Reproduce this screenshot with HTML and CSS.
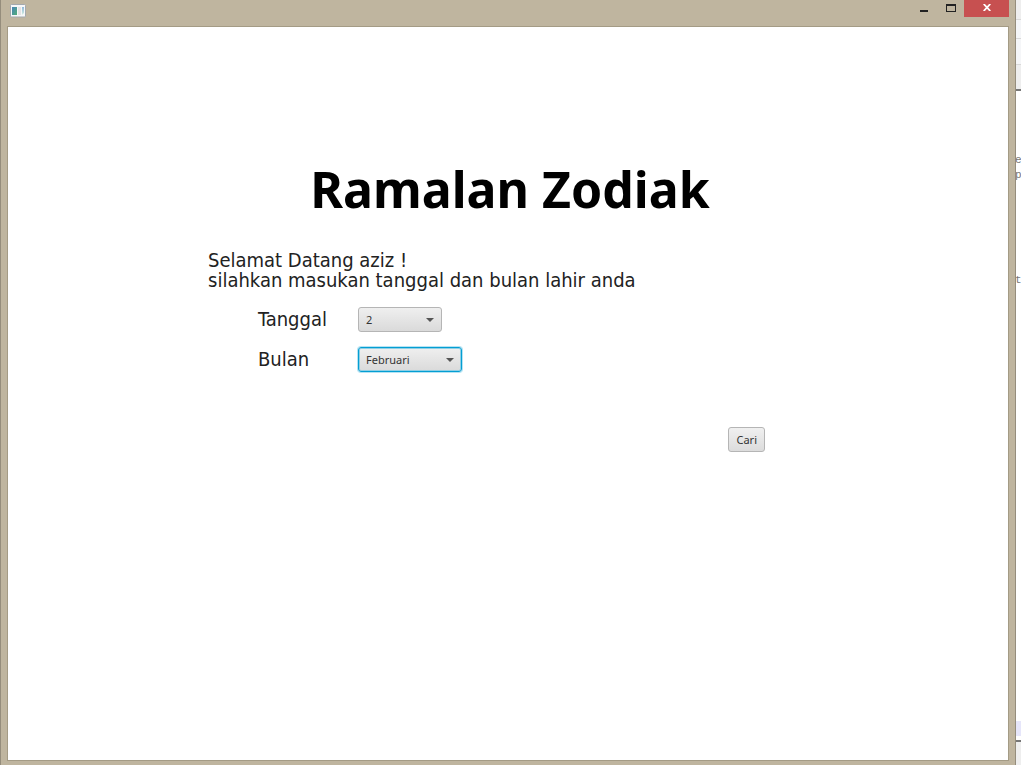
FILE: index.html
```html
<!DOCTYPE html>
<html lang="id">
<head>
<meta charset="utf-8">
<title>Ramalan Zodiak</title>
<link rel="stylesheet" href="styles.css">
</head>
<body>
<div class="window">
  <header class="titlebar">
    <svg class="app-icon" width="16" height="14" viewBox="0 0 16 14" aria-hidden="true">
      <defs>
        <linearGradient id="pane" x1="0" y1="0" x2="1" y2="1"><stop offset="0" stop-color="#4a83b8"/><stop offset="1" stop-color="#4fae78"/></linearGradient>
        <linearGradient id="side" x1="0" y1="0" x2="0" y2="1"><stop offset="0" stop-color="#8fb8dc"/><stop offset="1" stop-color="#d5efe0"/></linearGradient>
      </defs>
      <rect x=".5" y=".5" width="15" height="12.5" rx="1" fill="#f6f7f8" stroke="#a3a8ae"/>
      <rect x="2" y="3" width="5" height="8" fill="url(#pane)"/>
      <rect x="8" y="3" width="3" height="8" fill="#e3e3e3"/>
      <path d="M12 3h2v6l-2 2z" fill="url(#side)"/>
    </svg>
    <div class="controls">
      <button class="control" type="button" aria-label="Minimize">
        <svg width="8" height="8" viewBox="0 0 8 8"><path d="M0 6h8v2H0z" fill="#222"/></svg>
      </button>
      <button class="control" type="button" aria-label="Maximize">
        <svg width="10" height="8" viewBox="0 0 10 8"><path d="M0 0h10v8H0zM1 2v5h8V2z" fill="#222" fill-rule="evenodd"/></svg>
      </button>
      <button class="control close" type="button" aria-label="Close">
        <svg width="8" height="7" viewBox="0 0 8 7"><path d="M.7 0L7.3 7M7.3 0L.7 7" stroke="#fff" stroke-width="1.8"/></svg>
      </button>
    </div>
  </header>
  <main class="client">
    <form class="form">
      <h1 class="title">Ramalan Zodiak</h1>
      <p class="intro">Selamat Datang aziz !<br>silahkan masukan tanggal dan bulan lahir anda</p>
      <div class="fields">
        <label for="tanggal">Tanggal</label>
        <select class="select day" id="tanggal"><option>1</option><option selected>2</option><option>3</option></select>
        <label for="bulan">Bulan</label>
        <select class="select month" id="bulan"><option>Januari</option><option selected>Februari</option><option>Maret</option></select>
      </div>
      <div class="actions"><button class="submit" type="button">Cari</button></div>
    </form>
  </main>
</div>
<aside class="behind">
  <div class="bar"></div>
  <div class="bar pale"></div>
  <div class="bar pale tall"></div>
  <div class="bar ruled"></div>
  <div class="code"><span class="line">e</span><span class="line">p</span><span class="line far">t</span></div>
  <div class="current"></div>
  <div class="status"></div>
</aside>
</body>
</html>
```
FILE: styles.css
```css
* { box-sizing: border-box; }

body {
  margin: 0;
  display: flex;
  height: 100vh;
  overflow: hidden;
  background: #fff;
  color: #222;
  font-family: "DejaVu Sans Condensed", "DejaVu Sans", sans-serif;
}

.window {
  flex: 1;
  display: flex;
  flex-direction: column;
  padding: 0 6px 4px;
  border: solid #958d7c;
  border-width: 0 1px;
  background: #bfb59f;
}

.titlebar {
  display: flex;
  justify-content: space-between;
  align-items: flex-start;
  height: 26px;
  padding-left: 3px;
}

.app-icon { margin-top: 4px; }

.controls { display: flex; }

.control {
  display: flex;
  align-items: center;
  justify-content: center;
  width: 27px;
  height: 15px;
  padding: 0;
  border: 0;
  background: none;
}

.close {
  width: 45px;
  height: 17px;
  padding-bottom: 2px;
  background: #c75050;
}

.client {
  flex: 1;
  border: 1px solid #a49b85;
  background: #fff;
}

.form {
  max-width: 600px;
  margin: 0 auto;
  padding-top: 132px;
}

.title {
  margin: 0;
  padding-left: 4px;
  color: #000;
  font-family: "Noto Sans", "Open Sans", sans-serif;
  font-size: 50px;
  line-height: 60px;
  text-align: center;
}

.intro {
  margin: 31px 0 0;
  font-size: 20px;
  line-height: 20px;
}

.fields {
  display: grid;
  grid-template-columns: 100px max-content;
  row-gap: 15px;
  align-items: center;
  padding: 17px 0 0 50px;
  font-size: 20px;
  line-height: 25px;
}

.select,
.submit {
  height: 25px;
  border: 1px solid #b5b5b5;
  border-radius: 3px;
  color: #333;
  font-family: "Noto Sans", "Open Sans", sans-serif;
  font-size: 11px;
}

.select {
  appearance: none;
  padding: 0 7px;
  background:
    url("data:image/svg+xml,%3Csvg xmlns='http://www.w3.org/2000/svg' width='8' height='4'%3E%3Cpath d='M0 0h8L4 4z' fill='%23555'/%3E%3C/svg%3E") no-repeat right 7px center,
    linear-gradient(#efefef, #dadada);
}

.day { width: 84px; }

.month {
  width: 104px;
  border-color: #039ed3;
  box-shadow: 0 0 0 1px #b5e3f3, inset 0 0 0 1px #8fcfe5;
}

.actions {
  display: flex;
  justify-content: flex-end;
  padding: 55px 43px 0 0;
}

.submit {
  padding: 0 7px;
  background: linear-gradient(#f0f0f0, #dcdcdc);
}

.behind {
  display: flex;
  flex-direction: column;
  width: 5px;
  overflow: hidden;
  background: #fff;
}

.bar {
  height: 20px;
  border-bottom: 1px solid #d9d9d9;
  background: #eee;
}

.pale {
  height: 19px;
  background: #f5f6f8;
}

.tall { height: 26px; }

.ruled {
  height: 26px;
  border-bottom: 2px solid #777;
}

.code {
  flex: 1;
  padding-top: 62px;
  color: #777;
  font-family: "Liberation Mono", monospace;
  font-size: 11px;
  line-height: 15px;
}

.line {
  display: block;
  margin-left: -1px;
}

.far { margin-top: 90px; }

.current {
  height: 15px;
  background: #e6e6fa;
}

.status {
  height: 25px;
  margin-top: 4px;
  border-top: 2px solid #777;
  background: #eee;
}
```
